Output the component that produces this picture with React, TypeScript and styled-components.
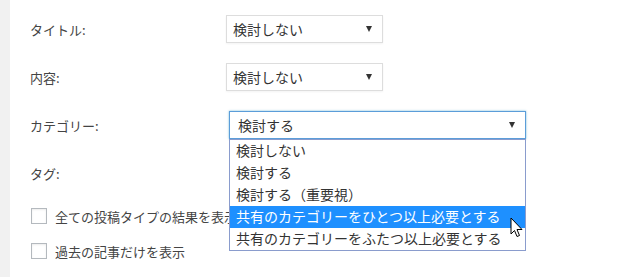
import React from "react";
import styled, { createGlobalStyle } from "styled-components";

const Global = createGlobalStyle`
  html, body { margin: 0; padding: 0; background: #fff; }
  body { font-family: "Noto Sans CJK JP", "Noto Sans", sans-serif; color: #444; }
`;

const Page = styled.div`
  display: flex;
  width: 630px;
  height: 277px;
  overflow: hidden;
`;

const Sidebar = styled.div`
  width: 10px;
  flex: none;
  background: #f1f1f1;
`;

const Main = styled.div`
  flex: 1;
  padding: 15px 0 0 20px;
  display: flex;
  flex-direction: column;
`;

const Row = styled.div`
  display: flex;
  align-items: center;
  height: 28px;
  margin-bottom: 20px;
`;

const Label = styled.div`
  width: 196px;
  font-size: 13px;
  color: #444;
`;

const SelectBox = styled.div<{ $width: number; $open?: boolean }>`
  position: relative;
  box-sizing: border-box;
  width: ${(p) => p.$width}px;
  height: 28px;
  border: 1px solid ${(p) => (p.$open ? "#5b9dd9" : "#ddd")};
  box-shadow: ${(p) => (p.$open ? "0 0 2px rgba(30,140,190,.6)" : "0 1px 2px rgba(0,0,0,.05)")};
  background: #fff;
  display: flex;
  align-items: center;
  justify-content: space-between;
  padding: 0 10px 0 ${(p) => (p.$open ? 8 : 6)}px;
  font-size: 14px;
  color: #333;
  margin-left: ${(p) => (p.$open ? 3 : 0)}px;
`;

const Arrow = styled.span`
  width: 0;
  height: 0;
  border-left: 3.5px solid transparent;
  border-right: 3.5px solid transparent;
  border-top: 6px solid #333;
`;

const List = styled.div`
  position: absolute;
  left: -1px;
  right: -1px;
  top: 27px;
  box-sizing: border-box;
  border: 1px solid #8a9ccd;
  background: #fff;
  padding: 0;
  z-index: 2;
`;

const Option = styled.div<{ $active?: boolean }>`
  position: relative;
  height: 22px;
  line-height: 21px;
  padding-left: 6px;
  font-size: 14px;
  white-space: nowrap;
  color: ${(p) => (p.$active ? "#fff" : "#333")};
  background: ${(p) => (p.$active ? "#1e90ff" : "transparent")};
`;

const CheckRow = styled.label<{ $top: number }>`
  display: flex;
  align-items: center;
  height: 20px;
  margin-left: 1px;
  margin-top: ${(p) => p.$top}px;
  font-size: 13px;
  color: #444;
`;

const Box = styled.span`
  box-sizing: border-box;
  width: 16px;
  height: 16px;
  border: 1px solid #b4b9be;
  background: #fff;
  box-shadow: inset 0 1px 2px rgba(0,0,0,.08);
  margin-right: 8px;
`;

const Cursor = styled.svg`
  position: absolute;
  right: 1px;
  top: 11px;
  z-index: 3;
`;

const options = [
  "検討しない",
  "検討する",
  "検討する（重要視）",
  "共有のカテゴリーをひとつ以上必要とする",
  "共有のカテゴリーをふたつ以上必要とする",
];

export default function App() {
  return (
    <>
      <Global />
      <Page>
        <Sidebar />
        <Main>
          <Row>
            <Label>タイトル:</Label>
            <SelectBox $width={157}>
              検討しない<Arrow />
            </SelectBox>
          </Row>
          <Row>
            <Label>内容:</Label>
            <SelectBox $width={157}>
              検討しない<Arrow />
            </SelectBox>
          </Row>
          <Row>
            <Label>カテゴリー:</Label>
            <SelectBox $width={297} $open>
              検討する<Arrow />
              <List>
                {options.map((o, i) => (
                  <Option key={o} $active={i === 3}>
                    {o}
                    {i === 3 && (
                      <Cursor width="14" height="22" viewBox="0 0 14 22">
                        <path
                          d="M1 1 L1 17 L4.5 13.5 L7 19.5 L9.5 18.5 L7 12.5 L12 12.5 Z"
                          fill="#fff"
                          stroke="#000"
                          strokeWidth="1"
                        />
                      </Cursor>
                    )}
                  </Option>
                ))}
              </List>
            </SelectBox>
          </Row>
          <Row>
            <Label>タグ:</Label>
          </Row>
          <CheckRow $top={-1}>
            <Box />
            全ての投稿タイプの結果を表示
          </CheckRow>
          <CheckRow $top={15}>
            <Box />
            過去の記事だけを表示
          </CheckRow>
        </Main>
      </Page>
    </>
  );
}
